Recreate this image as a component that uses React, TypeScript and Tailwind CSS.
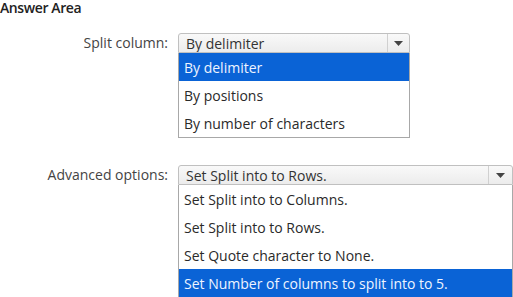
import React from "react";

function Arrow() {
  return (
    <svg width="9" height="5" viewBox="0 0 9 5">
      <polygon points="0,0 9,0 4.5,5" fill="#444" />
    </svg>
  );
}

function Select({ value, options, selected, width, btnW }: { value: string; options: string[]; selected: number; width: number; btnW: number }) {
  return (
    <div style={{ width }} className="flex flex-col">
      <div className="flex h-[20px] border border-[#c0c0c0] rounded-t-[3px] bg-gradient-to-b from-[#f9f9f9] to-[#ececec]">
        <div className="flex-1 pl-[7px] text-[14px] leading-[19px] text-[#333] truncate">{value}</div>
        <div style={{ width: btnW }} className="flex items-center justify-center border-l border-[#d0d0d0]">
          <Arrow />
        </div>
      </div>
      <div className="border border-[#a8a8a8] border-t-0 bg-white">
        {options.map((o, i) => (
          <div
            key={o}
            className={
              "h-[28px] pl-[5px] flex items-center text-[14px] " +
              (i === selected ? "bg-[#0a63d6] text-[#eef4ff]" : "text-[#2a2a2a]")
            }
          >
            {o}
          </div>
        ))}
      </div>
    </div>
  );
}

export default function App() {
  return (
    <div className="w-[513px] h-[297px] bg-white overflow-hidden" style={{ fontFamily: '"Open Sans", "Noto Sans", sans-serif' }}>
      <div className="text-[14px] font-semibold leading-[16px] text-[#222] tracking-[-0.4px]">Answer Area</div>
      <div className="flex mt-[17px]">
        <div className="w-[170px] pr-[2px] text-right text-[14px] leading-[20px] text-[#444]">Split column:</div>
        <div className="ml-[8px]">
          <Select
            value="By delimiter"
            options={["By delimiter", "By positions", "By number of characters"]}
            selected={0}
            width={232}
            btnW={22}
          />
        </div>
      </div>
      <div className="flex mt-[27px]">
        <div className="w-[170px] pr-[2px] text-right text-[14px] leading-[20px] text-[#444]">Advanced options:</div>
        <div className="ml-[8px]">
          <Select
            value="Set Split into to Rows."
            options={[
              "Set Split into to Columns.",
              "Set Split into to Rows.",
              "Set Quote character to None.",
              "Set Number of columns to split into to 5.",
            ]}
            selected={3}
            width={335}
            btnW={24}
          />
        </div>
      </div>
    </div>
  );
}
